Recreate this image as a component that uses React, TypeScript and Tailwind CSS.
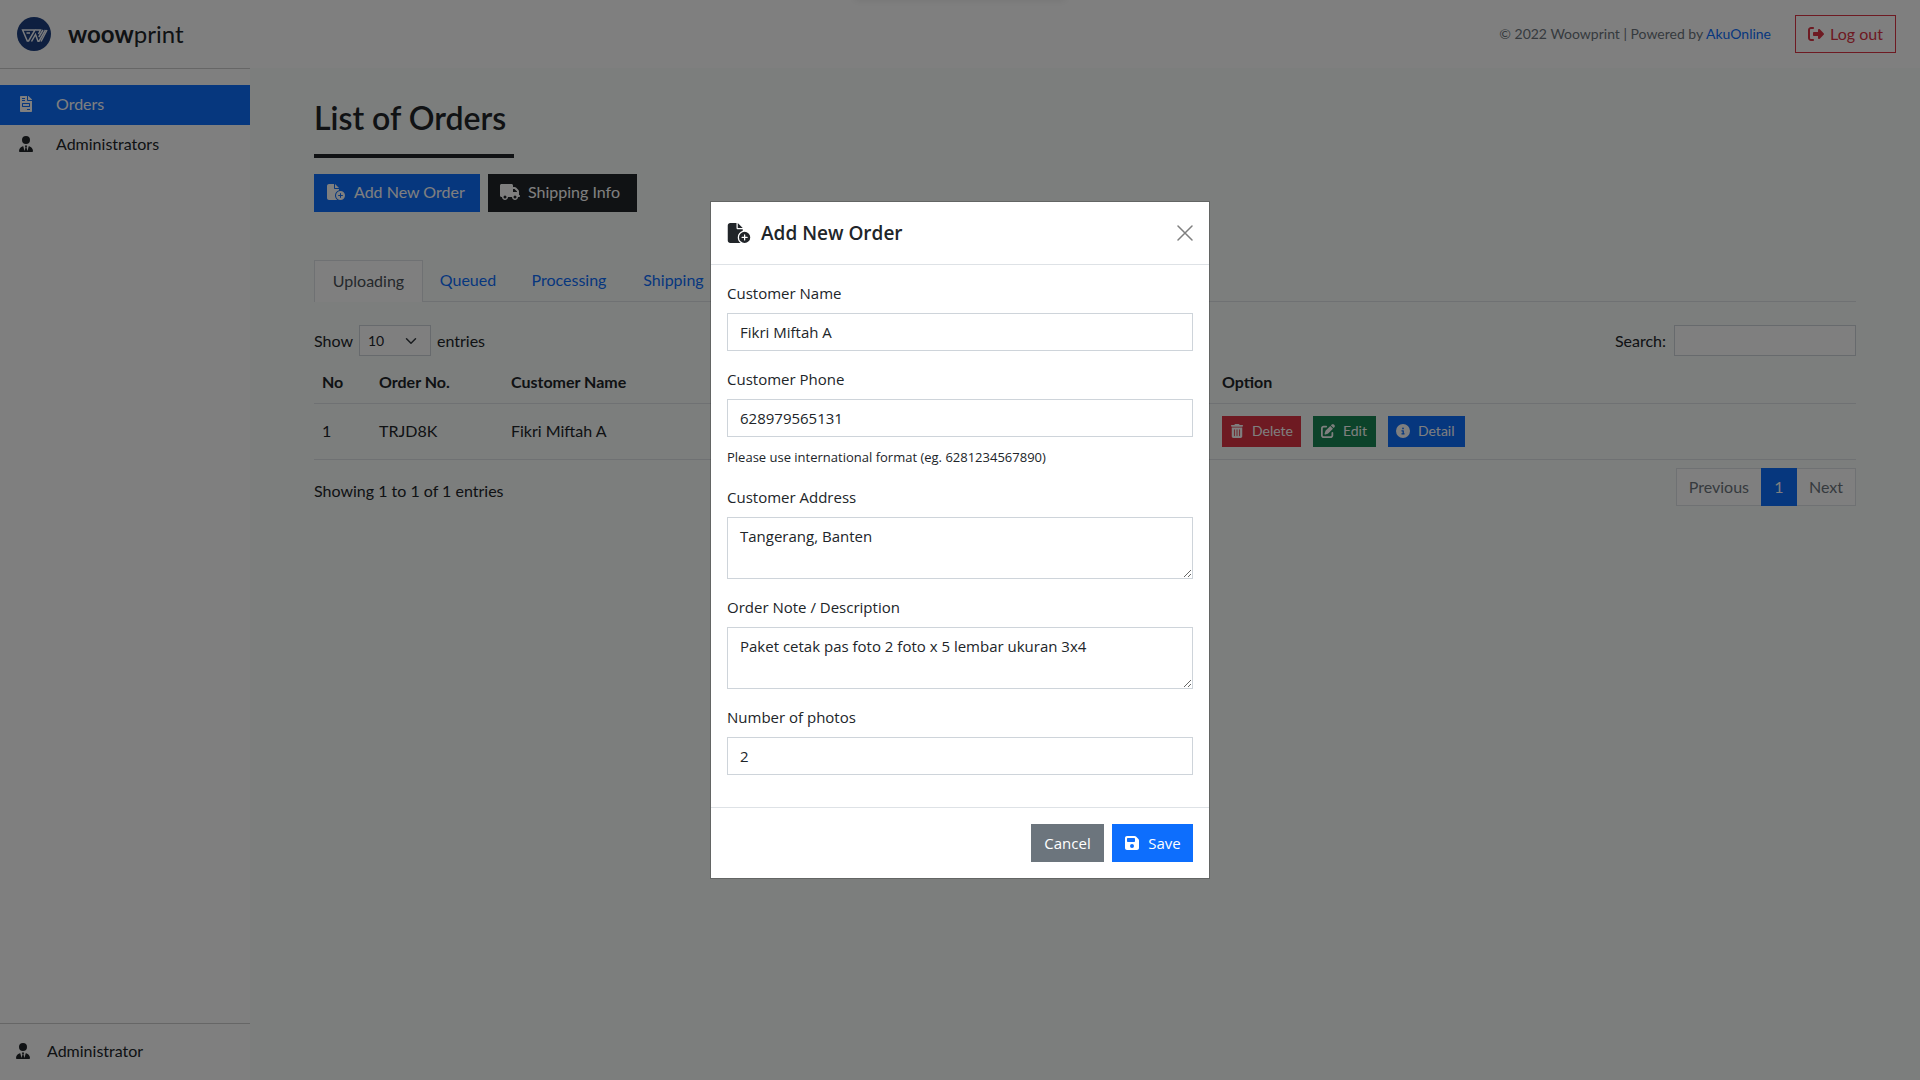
import React, { useState } from "react";
import { FaFileInvoice } from "react-icons/fa";
import {
  FaFileCirclePlus,
  FaTruck,
  FaUserTie,
  FaTrashCan,
  FaPenToSquare,
  FaCircleInfo,
  FaFloppyDisk,
  FaRightFromBracket,
} from "react-icons/fa6";

const fieldClass =
  "block w-full border border-[#ced4da] bg-white px-3 py-1.5 text-[15px] leading-6 text-[#212529] outline-none";
const labelClass = "mb-2 block leading-6";

function Logo() {
  return (
    <svg viewBox="0 0 34 34" className="size-[34px] shrink-0" aria-hidden="true">
      <circle cx="17" cy="17" r="17" fill="#1d3f80" />
      <g fill="none" stroke="#f4f6fa" strokeWidth="1.5">
        <path d="M13 16H9.500M5.600 13H18l-6.400 11h-1.300z" />
        <path d="M14.500 24.500l4-7 2.500 6.700h1L28.500 13" />
        <path d="M18.500 13h5l-2 4M26 13l-4.200 7M24 24.500L30 13" />
      </g>
    </svg>
  );
}

function TopBar() {
  return (
    <header className="flex h-[68px] items-center justify-between bg-white pl-[17px] pr-6">
      <a href="#home" className="flex items-center gap-[17px] text-2xl">
        <Logo />
        <span>
          <b className="font-bold">woow</b>print
        </span>
      </a>
      <div className="flex items-center gap-6">
        <p className="text-sm text-[#6c757d]">
          © 2022 Woowprint | Powered by{" "}
          <a href="#akuonline" className="text-[#0d6efd]">
            AkuOnline
          </a>
        </p>
        <button className="flex h-[38px] w-[101px] items-center justify-center gap-1.5 border border-[#dc3545] text-[#dc3545]">
          <FaRightFromBracket />
          Log out
        </button>
      </div>
    </header>
  );
}

function Sidebar() {
  return (
    <aside className="flex w-[250px] shrink-0 flex-col border-t border-[#ccc] bg-white">
      <nav className="flex-1 pt-4">
        <a href="#orders" className="flex h-10 items-center gap-[22px] bg-[#0d6efd] pb-0.5 pl-[18px] text-white">
          <FaFileInvoice className="w-4" />
          Orders
        </a>
        <a href="#administrators" className="flex h-10 items-center gap-[22px] pb-0.5 pl-[18px]">
          <FaUserTie className="w-4" />
          Administrators
        </a>
      </nav>
      <div className="flex h-[57px] items-center gap-4 border-t border-[#ccc] pb-0.5 pl-[15px]">
        <FaUserTie />
        Administrator
      </div>
    </aside>
  );
}

function Orders() {
  return (
    <main className="min-w-0 flex-1 bg-[#f8fcfa] px-16 pt-[30px]">
      <h1 className="text-[32px] leading-10 font-semibold">List of Orders</h1>
      <div className="mt-4 h-1 w-[200px] bg-[#212529]" />
      <div className="mt-4 flex gap-2 text-white">
        <button className="flex h-[38px] w-[166px] items-center gap-2 bg-[#0d6efd] px-3 pb-0.5">
          <FaFileCirclePlus className="h-4 w-5" />
          Add New Order
        </button>
        <button className="flex h-[38px] w-[149px] items-center gap-2 bg-[#212529] px-3 pb-0.5">
          <FaTruck className="h-4 w-5" />
          Shipping Info
        </button>
      </div>

      <div role="tablist" className="mt-12 flex border-b border-[#dee2e6] text-[#0d6efd]">
        <button role="tab" aria-selected="true" className="-mb-px h-[42px] w-[109px] border border-b-0 border-[#dee2e6] bg-white pb-0.5 text-[#495057]">
          Uploading
        </button>
        <button role="tab" className="w-[90px] pb-0.5">Queued</button>
        <button role="tab" className="w-28 pb-0.5">Processing</button>
        <button role="tab" className="w-[97px] pb-0.5">Shipping</button>
      </div>

      <div className="mt-[23px] flex items-center justify-between">
        <label className="flex items-center gap-1.5">
          Show
          <span className="relative flex">
            <select className="h-[31px] w-[72px] appearance-none border border-[#ced4da] bg-white pl-2 text-sm" defaultValue="10">
              <option>10</option>
              <option>25</option>
              <option>50</option>
            </select>
            <svg viewBox="0 0 16 16" className="pointer-events-none absolute top-2.5 right-3.5 size-3" fill="none" stroke="#343a40" strokeWidth="2" strokeLinecap="round" strokeLinejoin="round" aria-hidden="true">
              <path d="m2 5 6 6 6-6" />
            </svg>
          </span>
          entries
        </label>
        <label className="flex items-center gap-2">
          Search:
          <input type="search" className="h-[31px] w-[182px] border border-[#ced4da] bg-white px-2 text-sm" />
        </label>
      </div>

      <table className="mt-1.5 w-full table-fixed text-left">
        <colgroup>
          <col className="w-[57px]" />
          <col className="w-[132px]" />
          <col className="w-[711px]" />
          <col />
        </colgroup>
        <thead>
          <tr className="h-[41px] border-b border-[#dee2e6]">
            <th className="px-2 font-bold">No</th>
            <th className="px-2 font-bold">Order No.</th>
            <th className="px-2 font-bold">Customer Name</th>
            <th className="px-2 font-bold">Option</th>
          </tr>
        </thead>
        <tbody>
          <tr className="h-14 border-b border-[#dee2e6]">
            <td className="px-2">1</td>
            <td className="px-2">TRJD8K</td>
            <td className="px-2">Fikri Miftah A</td>
            <td className="px-2">
              <div className="flex gap-3 text-sm text-white">
                <button className="flex h-[31px] items-center gap-2 bg-[#dc3545] px-2">
                  <FaTrashCan />
                  Delete
                </button>
                <button className="flex h-[31px] w-[63px] items-center gap-2 bg-[#198754] px-2">
                  <FaPenToSquare />
                  Edit
                </button>
                <button className="flex h-[31px] w-[77px] items-center gap-2 bg-[#0d6efd] px-2">
                  <FaCircleInfo />
                  Detail
                </button>
              </div>
            </td>
          </tr>
        </tbody>
      </table>

      <div className="mt-2 flex items-start justify-between">
        <p className="pt-[11px] leading-6">Showing 1 to 1 of 1 entries</p>
        <nav aria-label="Pages" className="flex h-[38px] text-[#6c757d]">
          <button className="border border-r-0 border-[#dee2e6] bg-white px-3">Previous</button>
          <button className="w-9 bg-[#0d6efd] text-white">1</button>
          <button className="border border-l-0 border-[#dee2e6] bg-white px-3">Next</button>
        </nav>
      </div>
    </main>
  );
}

function OrderDialog() {
  const [name, setName] = useState("Fikri Miftah A");
  const [phone, setPhone] = useState("628979565131");
  const [address, setAddress] = useState("Tangerang, Banten");
  const [note, setNote] = useState("Paket cetak pas foto 2 foto x 5 lembar ukuran 3x4");
  const [photos, setPhotos] = useState("2");

  return (
    <div className="fixed inset-0 flex items-center justify-center bg-black/50">
      <form
        role="dialog"
        aria-labelledby="dialog-title"
        className="w-[500px] border border-black/20 bg-white bg-clip-padding font-['Open_Sans',sans-serif] text-[15px] text-[#212529]"
      >
        <div className="flex h-[63px] items-center justify-between border-b border-[#dee2e6] px-4">
          <h2 id="dialog-title" className="flex items-center gap-2.5 text-[19px] font-semibold">
            <FaFileCirclePlus className="h-5 w-6" />
            Add New Order
          </h2>
          <button type="button" aria-label="Close">
            <svg viewBox="0 0 16 16" className="size-4 text-black/50" stroke="currentColor" strokeWidth="1.500" strokeLinecap="round" aria-hidden="true">
              <path d="M1 1l14 14M15 1L1 15" />
            </svg>
          </button>
        </div>
        <div className="flex flex-col gap-4 px-4 pt-4 pb-8">
          <div>
            <label htmlFor="name" className={labelClass}>Customer Name</label>
            <input id="name" className={fieldClass} value={name} onChange={(e) => setName(e.target.value)} />
          </div>
          <div>
            <label htmlFor="phone" className={labelClass}>Customer Phone</label>
            <input id="phone" className={fieldClass} value={phone} onChange={(e) => setPhone(e.target.value)} />
            <p className="mt-2 text-[13px] leading-6">Please use international format (eg. 6281234567890)</p>
          </div>
          <div>
            <label htmlFor="address" className={labelClass}>Customer Address</label>
            <textarea id="address" rows={2} className={`${fieldClass} h-[62px]`} value={address} onChange={(e) => setAddress(e.target.value)} />
          </div>
          <div>
            <label htmlFor="note" className={labelClass}>Order Note / Description</label>
            <textarea id="note" rows={2} className={`${fieldClass} h-[62px]`} value={note} onChange={(e) => setNote(e.target.value)} />
          </div>
          <div>
            <label htmlFor="photos" className={labelClass}>Number of photos</label>
            <input id="photos" className={fieldClass} value={photos} onChange={(e) => setPhotos(e.target.value)} />
          </div>
        </div>
        <div className="flex justify-end gap-2 border-t border-[#dee2e6] p-4 text-white">
          <button type="button" className="h-[38px] w-[73px] bg-[#6c757d]">Cancel</button>
          <button type="button" className="flex h-[38px] w-[81px] items-center justify-center gap-2 bg-[#0d6efd]">
            <FaFloppyDisk className="size-4" />
            Save
          </button>
        </div>
      </form>
    </div>
  );
}

export default function App() {
  return (
    <div className="flex min-h-screen flex-col font-['Lato',sans-serif] text-base text-[#212529]">
      <TopBar />
      <div className="flex flex-1">
        <Sidebar />
        <Orders />
      </div>
      <OrderDialog />
      <div aria-hidden="true" className="pointer-events-none fixed inset-x-0 -top-2 mx-auto h-2 w-[210px] shadow-[0_0_8px_rgba(0,0,0,0.1)]" />
    </div>
  );
}
